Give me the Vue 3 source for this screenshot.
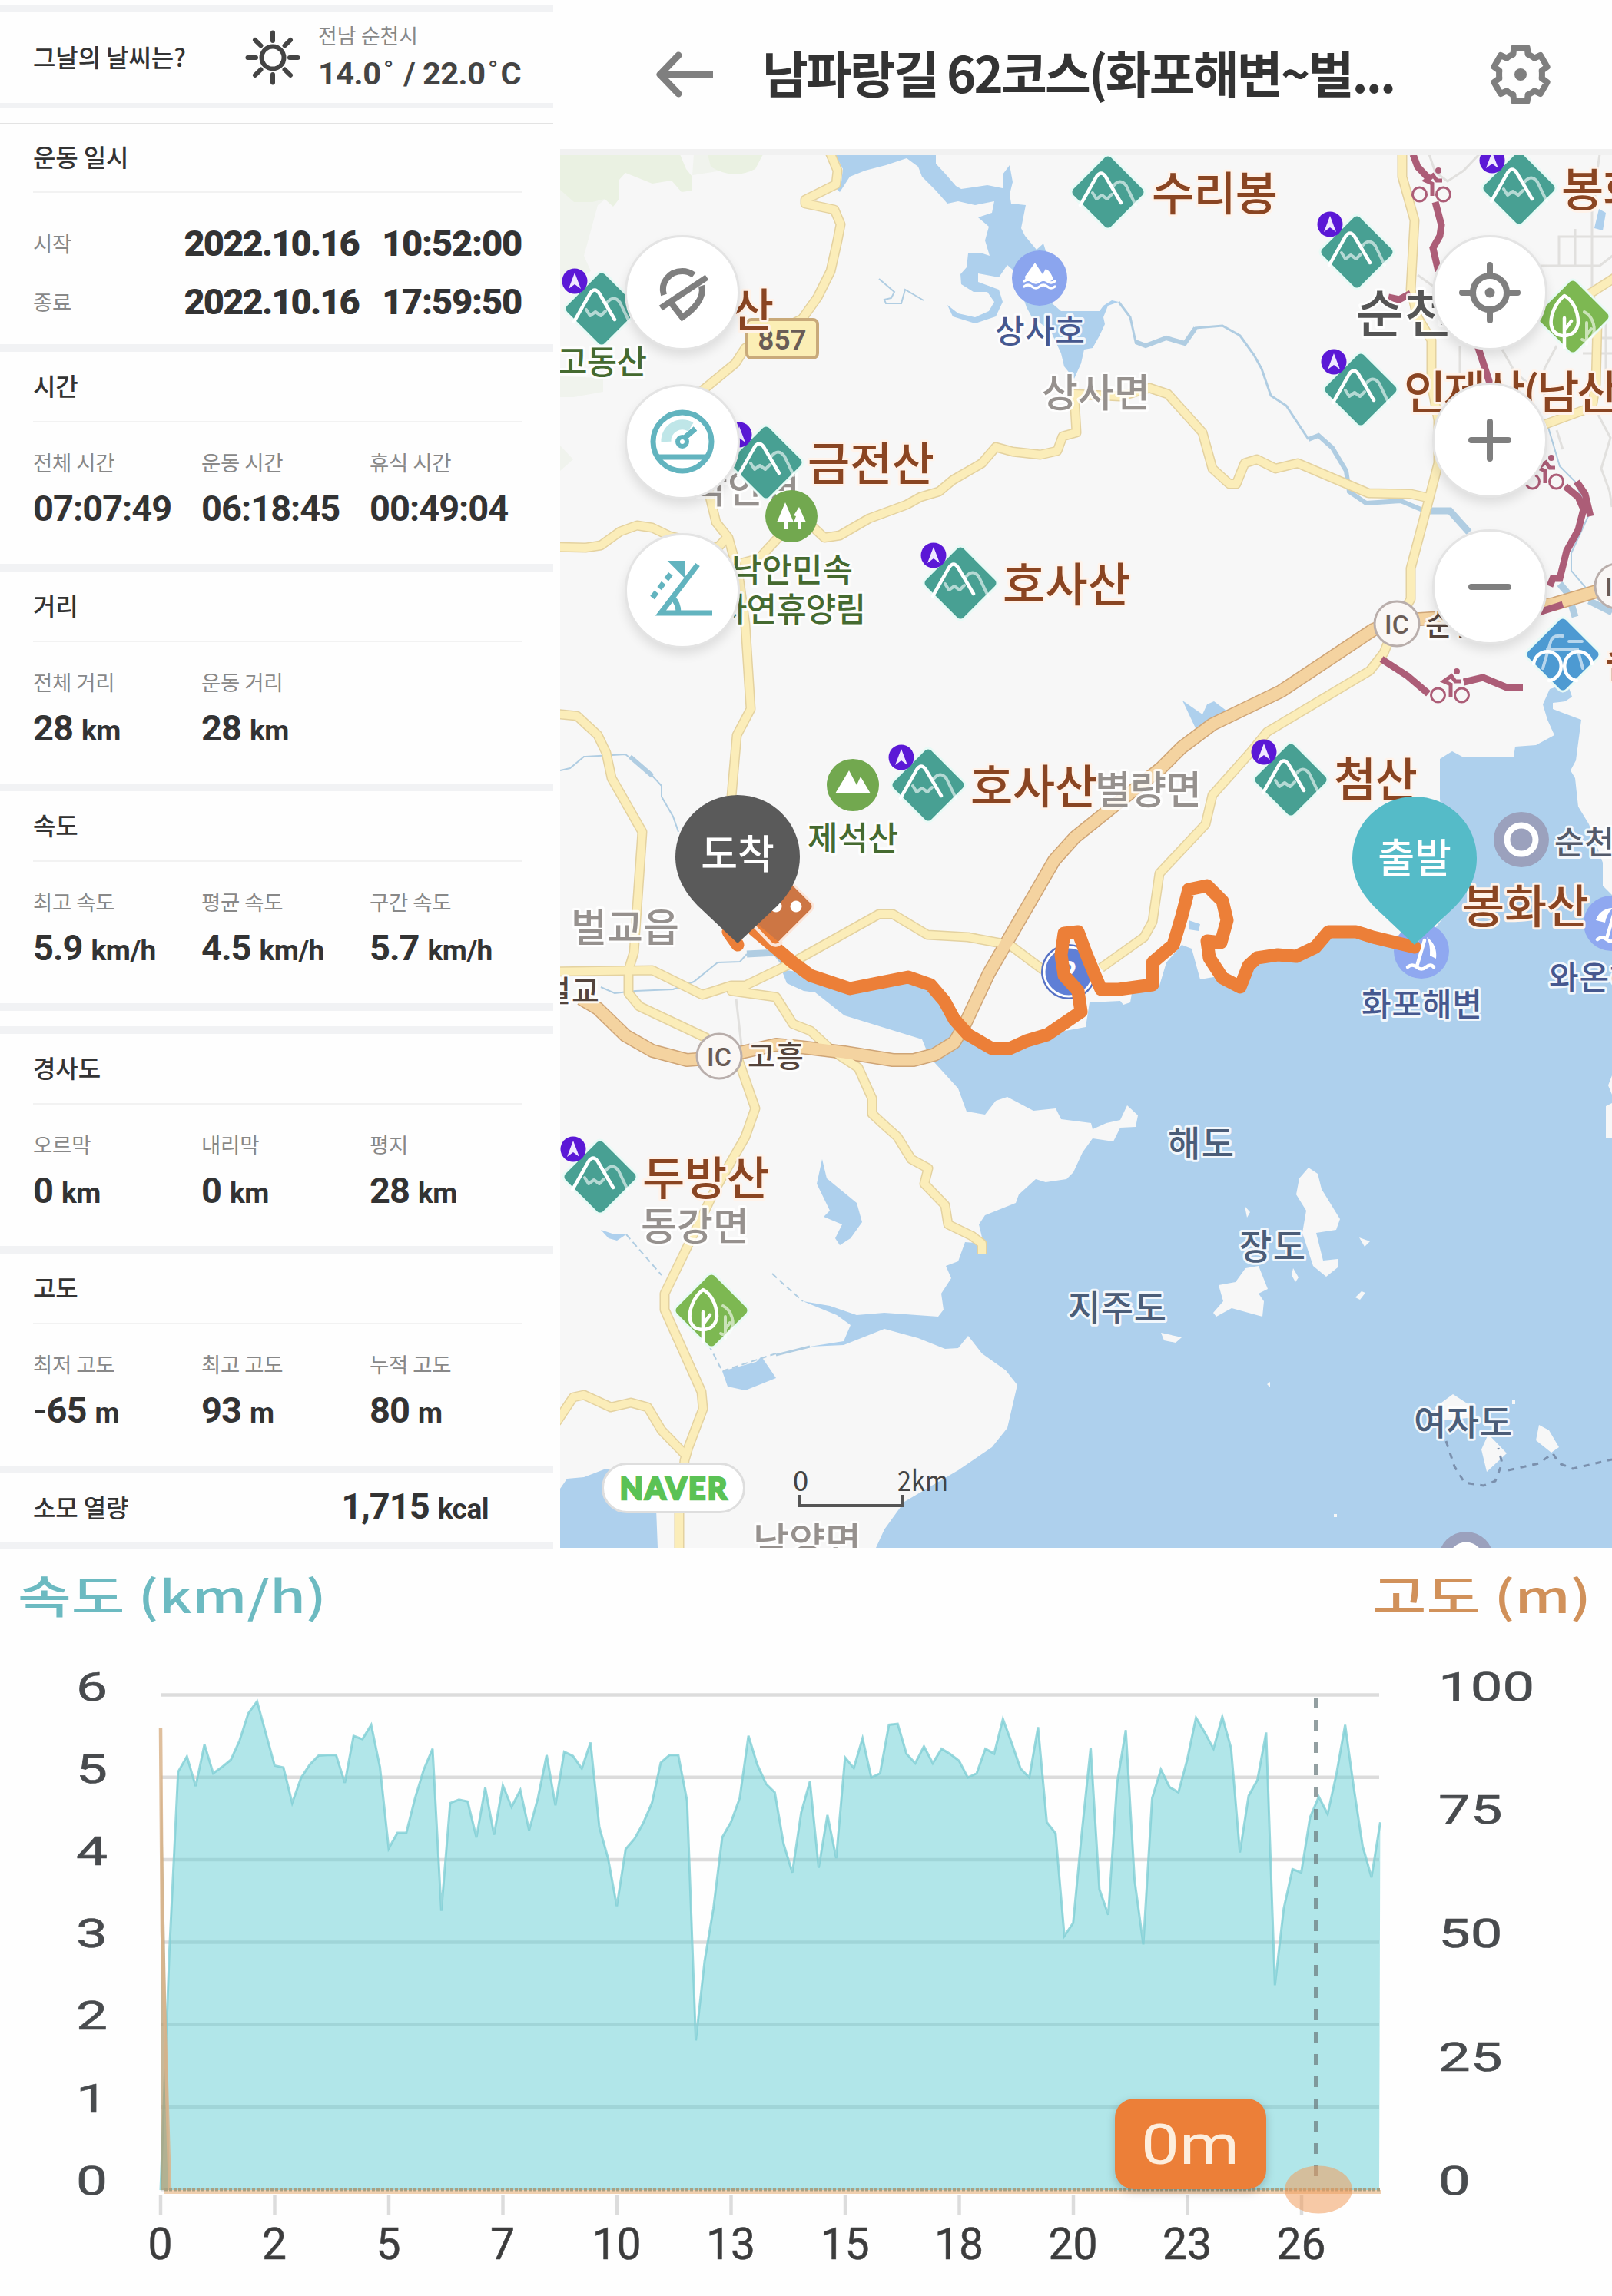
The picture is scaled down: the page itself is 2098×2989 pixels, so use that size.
<template>
  <div class="record">
    <aside class="stats">
      <div class="weather">
        <h3 class="title">그날의 날씨는?</h3>
        <svg class="sun" viewBox="-38 -38 76 76">
          <circle r="14.5" />
          <line v-for="n in 8" :key="n" y1="-32.5" y2="-22" :transform="`rotate(${n * 45})`" />
        </svg>
        <div class="forecast">
          <p class="place">전남 순천시</p>
          <p class="temp">14.0<i>˚</i> / 22.0<i>˚</i>C</p>
        </div>
      </div>

      <section class="card first">
        <h3 class="title">운동 일시</h3>
        <div v-for="row in period" :key="row.label" class="row">
          <span class="label">{{ row.label }}</span>
          <span class="value"><b class="date">{{ row.date }}</b><b class="clock">{{ row.time }}</b></span>
        </div>
      </section>

      <section
          v-for="card in cards"
          :key="card.title"
          class="card"
          :class="{ gap: card.gap }"
      >
        <h3 class="title">{{ card.title }}</h3>
        <div class="cols">
          <div v-for="item in card.items" :key="item[0]" class="col">
            <span class="label">{{ item[0] }}</span>
            <span class="value" :class="{ time: !item[2] }">{{ item[1] }}<small v-if="item[2]">{{ item[2] }}</small></span>
          </div>
        </div>
      </section>

      <section class="calorie">
        <h3 class="title">소모 열량</h3>
        <span class="value">1,715<small>kcal</small></span>
      </section>
      <div class="tail"></div>
    </aside>

    <main class="course">
      <header class="bar">
        <svg class="back" viewBox="0 0 76 64">
          <path d="M74 32H7M31 7L7 32L31 57" />
        </svg>
        <h1>남파랑길 62코스(화포해변~벌...</h1>
        <svg class="gear" viewBox="-42 -42 84 84">
          <polygon :points="gearPoints" />
          <circle r="8" />
        </svg>
      </header>

      <div class="map">
        <svg class="canvas" viewBox="729 202 1369 1813">
          <defs>
            <g id="mountain">
              <rect x="-36" y="-36" width="72" height="72" rx="7" transform="rotate(45)" class="diamond" />
              <path d="M7 -8Q16 -19 24 -8L36 17M-20 1L-15 9L-8 4L-1 9L5 3" class="soft" />
              <path d="M-36 17L-15 -20Q-9 -29 -3 -20L17 14" class="bright" />
            </g>
            <g id="forest">
              <rect x="-36" y="-36" width="72" height="72" rx="7" transform="rotate(45)" class="diamond leaf" />
              <path d="M15 -6C27 0 31 18 25 26Q19 34 12 30M18 8V36M18 24L24 16" class="soft" />
              <path d="M-11 -27C-23 -18 -30 0 -28 12Q-25 25 -11 25Q5 24 7 8C7 -8 -1 -22 -11 -27ZM-11 2V40M-11 18L-2 6" class="bright" />
            </g>
            <g id="arrow">
              <circle r="16.5" fill="#5b18d6" />
              <path d="M0 -11L8 10L0 4L-8 10Z" fill="#f0e8ff" />
            </g>
            <g id="cyclist">
              <circle cx="-15.5" r="9" class="wheel" />
              <circle cx="15.5" r="9" class="wheel" />
              <circle cx="9" cy="-31" r="4" fill="#ac5d77" />
              <path d="M1 2V-14L-8 -18L2 -25L7 -18H14" class="rider" />
            </g>
            <g id="parasol">
              <path d="M-20 -4Q-15 -19 2 -20Q-6 -12 -8 -1ZM7 -18Q21 -8 19 10L11 6Q12 -8 7 -18Z" fill="#fff" />
              <path d="M4 -14L-6 20M-18 21Q-12 16 -6 21T6 21T16 21" class="bright" />
            </g>
          </defs>

          <rect x="729" y="202" width="1369" height="1813" fill="#f7f7f7" />

          <!-- woods -->
          <path class="wood pale" d="M729 201H787V260L778 267L760 333L769 353L729 375ZM903 201L901 228L934 223L950 201ZM729 490L785 492V510L747 517H729ZM729 580L746 598L729 613Z" />
          <path class="wood" d="M729 201H885L893 220L901 230V248L887 250L874 235L849 239L814 225L805 235V260L798 269L787 259L771 263L747 263L729 247ZM921 201L925 217Q954 235 983 220L993 201Z" />

          <!-- water -->
          <path class="water" d="M1087 201L1097 220L1095 237L1088 245L1093 250L1106 230L1126 222L1153 215L1180 206L1195 217L1200 230L1218 248L1233 265L1247 262L1269 267L1294 262L1291 277L1273 283L1287 295L1282 313L1288 333L1276 329L1260 330L1258 348L1250 357L1251 370L1267 380L1285 380L1294 393L1287 405L1269 413L1247 408L1233 397L1240 412L1269 421L1296 412L1305 393L1300 377L1273 367V356L1300 361L1311 345L1320 353L1336 400L1343 413L1367 430L1381 460L1385 477L1398 493L1407 473L1411 455L1422 453L1431 437L1438 422L1436 413L1442 398L1456 393L1447 391L1436 398L1431 405H1407L1381 405L1367 393L1363 333L1358 317L1349 325L1334 307L1329 297L1335 267L1316 265L1314 253L1318 237L1314 215L1305 227V245L1285 241L1251 246L1244 242L1231 227L1218 213V201Z" />
          <path class="water" d="M1017 1262L1024 1280L1046 1290L1061 1292L1099 1322L1200 1353L1207 1370L1216 1383L1247 1417L1258 1447L1282 1451L1296 1433L1311 1428L1345 1446L1374 1443L1381 1457L1420 1462L1422 1470L1440 1462L1458 1458L1467 1439L1481 1452L1478 1467L1458 1468L1449 1486L1422 1482L1409 1500L1397 1526L1388 1535L1361 1539L1348 1535L1326 1555L1322 1566L1282 1582L1274 1594L1280 1619L1256 1617L1247 1642L1231 1648L1238 1664L1225 1684L1228 1705L1221 1714L1151 1709L1115 1712L1080 1700L1045 1694L1089 1712L1107 1725L1098 1746L1054 1753L1098 1751L1151 1730L1195 1742L1230 1756L1247 1755L1260 1739L1278 1762L1309 1784L1324 1803L1311 1859L1291 1884L1247 1914L1177 1955L1151 1991L1140 2015H2098V1482H2090V1440L2098 1436V1425L2093 1413L2098 1400V1165L2086 1153V1123L2068 1073L2054 1050L2050 1013L2044 1003L2051 990L2058 937L2021 923V915L2037 913L2046 907L2040 890L2017 897L2008 917L2014 937L2023 957L1999 970L1972 972L1970 985H1903L1890 978L1874 988V1040L1890 1180L1845 1237L1787 1220L1765 1213H1729L1707 1237L1689 1247H1636L1614 1283L1591 1270L1562 1275L1551 1235L1538 1230L1518 1253L1509 1283L1473 1293L1471 1305L1462 1308L1458 1303L1418 1305L1413 1337L1381 1343L1354 1353L1300 1367L1278 1360L1256 1343L1233 1313L1211 1283L1180 1273L1104 1287L1050 1267Z" />
          <path class="water" d="M1547 1198L1562 1203L1560 1212L1547 1210ZM1539 912L1565 930L1571 917L1580 913L1596 925L1556 948ZM2081 272L2090 277L2086 300L2075 297ZM1070 1509L1076 1534L1115 1566L1122 1591L1107 1612L1093 1621L1087 1612L1096 1594L1072 1584L1080 1576L1063 1541ZM940 1785L984 1773L991 1766L1010 1794L995 1800L970 1810L947 1805ZM782 1601L800 1607L815 1607L803 1615L792 1612ZM729 1938L738 1925L760 1923L786 1913H852L856 2015H729Z" />
          <g class="stream">
            <path d="M1144 363L1164 380L1160 388L1151 390L1153 395H1173L1178 377L1202 391M729 1003L742 1000L760 985L814 982L849 1010L861 1023V1037L876 1063L883 1083M782 1285L800 1293L827 1290L876 1288L903 1278L934 1253L963 1252L972 1242M2014 553L2030 607L2050 627L2068 670L2045 720V743L2068 770L2098 795" />
            <path d="M815 1607L861 1660M1005 1658L1020 1672L1045 1694M1010 1762L940 1785L922 1750" class="faint" />
            <path d="M1054 1753L1010 1764M1456 393L1471 413L1478 445L1491 450L1518 440L1542 447L1556 427L1591 424L1614 437L1632 462L1642 480L1654 515L1674 528L1703 572" class="mid" />
            <path d="M1478 445L1491 450L1518 440L1542 447L1556 427M1703 572L1716 567L1734 583L1752 613L1756 640L1778 655L1823 652L1854 665M820 985L849 1010" class="wide" />
            <path d="M1854 665H1887L1912 693M972 1242L1010 1240L1022 1255M2030 760L2041 773L2050 803M2068 782L2098 797" class="broad" />
          </g>

          <!-- islands -->
          <path fill="#f7f7f7" d="M1703 1520L1715 1528L1720 1548L1744 1587L1739 1601L1713 1605L1722 1641L1741 1639V1650L1726 1662L1709 1648L1695 1605L1700 1576L1687 1555L1691 1534ZM1621 1651L1638 1648L1650 1678L1638 1684L1645 1694L1643 1714L1603 1703L1583 1714L1579 1709L1592 1694L1586 1673L1608 1669ZM1891 1815L1911 1828L1920 1845L1870 1850L1868 1832ZM1937 1867L1961 1892L1935 1916L1928 1887ZM2003 1855L2016 1862L2029 1884L2019 1891L1999 1875ZM1620 1570L1627 1578L1623 1585ZM1769 1611L1783 1616L1776 1623ZM1683 1651L1690 1663L1686 1669L1681 1660ZM1764 1689L1772 1681L1777 1683L1770 1692ZM1511 1735L1538 1741L1530 1748L1515 1745ZM1649 1802L1653 1799V1806ZM1736 1971H1740V1975H1736ZM1968 1823H1972V1828H1968Z" />
          <path class="ferry" d="M1882 1876L1893 1909L1906 1930L1931 1934L1946 1928L1955 1905L1950 1885M1963 1914L2003 1905L2021 1892L2029 1905L2047 1912L2098 1900" />

          <!-- city blocks -->
          <g class="street">
            <path d="M2006 346H2082L2105 328M2029 346V308H2098M2050 298V346M2072 270V400M1860 201L1868 224L1884 236L1905 222L1925 201M2082 201L2076 240V270M1845 358L1870 376M1900 450V520M1955 455L1972 485L1990 500M2026 450L2010 480V520M2090 420V500M2060 440H2098M2060 460H2098M2080 540L2096 570L2084 610L2095 640L2098 660M2026 560L2034 585M958 1300L966 1370" />
          </g>

          <!-- roads -->
          <g v-for="kind in ['casing', 'fill']" :key="kind" :class="kind">
            <path v-for="(d, i) in roads" :key="i" :d="d" />
            <path class="highway" :d="highway" />
          </g>

          <g class="cycleway">
            <path d="M1839 201L1845 217L1862 235M1868 263L1876 293L1874 307L1865 323L1872 353M1923 450L1941 505M2052 627L2063 643L2070 672M2037 633L2054 647L2061 663L2054 690L2039 717L2030 753H2021L2017 763M2003 797L2034 787M1798 858L1832 880L1859 903M1905 888L1930 882L1961 895H1982" />
            <path d="M1807 387L1821 390L1836 382" />
          </g>
          <use href="#cyclist" x="1863" y="253" />
          <use href="#cyclist" x="2010" y="627" />
          <use href="#cyclist" x="1887" y="905" />

          <rect x="972" y="416" width="92" height="50" rx="6" class="shield" />
          <text x="1018" y="455" class="road-no">857</text>

          <g v-for="(ic, i) in junctions" :key="'ic' + i">
            <circle :cx="ic[0]" :cy="ic[1]" r="29" class="ic" />
            <text :x="ic[0]" :y="ic[1] + 13" class="ic-text">IC</text>
          </g>

          <g v-for="(l, i) in lowLabels" :key="'low' + i">
            <text :x="l[1]" :y="l[2]" dy=".37em" :class="l[3]" :textLength="l[4]">{{ l[0] }}</text>
          </g>

          <!-- round places -->
          <g transform="translate(1353 362)">
            <circle r="36" fill="#8ba5ee" />
            <path d="M-19 -2L-6 -20L4 -5L8 -12Q14 -10 18 2L14 4H-18Z" fill="#fff" />
            <path d="M-20 4Q-15 0 -10 4T0 4T10 4T20 4M-20 11Q-15 7 -10 11T0 11T10 11T20 11" class="wave" />
          </g>
          <g transform="translate(1110 1022)">
            <circle r="34" fill="#72a84f" />
            <path d="M-23 11L-5 -19L5 0L10 -11L23 11Z" fill="#fff" />
          </g>
          <g v-for="x in [1850, 2097]" :key="x" :transform="`translate(${x} ${x === 1850 ? 1238 : 1202})`">
            <circle r="36" fill="#8fa8f0" />
            <use href="#parasol" />
          </g>
          <g v-for="p in [[1980, 1093], [1908, 2030]]" :key="p[0]" :transform="`translate(${p[0]} ${p[1]})`">
            <circle r="36" fill="#9ba1bd" />
            <circle r="18.5" class="ring" />
          </g>
          <g transform="translate(1391 1265)">
            <circle r="36" fill="#5470c4" />
            <circle r="32" fill="#5f7fd6" stroke="#fff" stroke-width="3" />
            <text y="14" class="two">2</text>
          </g>

          <use v-for="(m, i) in mountains" :key="'m' + i" href="#mountain" :x="m[0]" :y="m[1]" />
          <use v-for="(m, i) in badged" :key="'b' + i" href="#arrow" :x="m[0] - 35" :y="m[1] - 36" />
          <use href="#forest" x="2047" y="412" />
          <use href="#forest" x="926" y="1706" />
          <g transform="translate(1030 672)">
            <circle r="34" fill="#72a84f" />
            <path d="M-8 -18L3 8H-5V17H-10V8H-19ZM10 -12L19 8H12V17H8V8H3L6 0L3 -1Z" fill="#fff" />
          </g>
          <g transform="translate(2034 852)">
            <rect x="-36" y="-36" width="72" height="72" rx="7" transform="rotate(45)" class="diamond sky" />
            <path d="M-26 18L-16 -16Q-14 -26 0 -24M-20 -7H19L26 18M8 -17H25" class="soft" />
            <path d="M-38 12A18 19 0 1 1 -18 34M38 12A18 19 0 1 0 18 34" class="bright" />
          </g>

          <g v-for="(l, i) in labels" :key="'label' + i">
            <text :x="l[1]" :y="l[2]" dy=".37em" :class="l[3]" :textLength="l[4]">{{ l[0] }}</text>
          </g>

          <!-- bus terminal hidden under the finish pin -->
          <g transform="translate(1010 1180)">
            <rect x="-36" y="-36" width="72" height="72" rx="7" transform="rotate(45)" class="diamond bus" />
            <circle r="7.5" fill="#fff" />
            <circle cx="26" r="7.5" fill="#fff" />
          </g>

          <path class="track" d="M948 1213L960 1230M981 1210L1032 1253L1055 1270L1106 1287L1182 1272L1211 1282L1229 1303L1242 1327L1260 1347L1291 1365H1314L1336 1355L1363 1347L1407 1317L1403 1290L1385 1270L1381 1243L1385 1215L1403 1213L1413 1240L1424 1267L1433 1288H1456L1500 1282V1253L1527 1230L1538 1193L1547 1158L1571 1153L1591 1173L1597 1198L1589 1227L1571 1225L1574 1247L1591 1273L1614 1285L1625 1257L1636 1247L1663 1243L1687 1245L1712 1233L1729 1213H1765L1787 1220L1841 1233" />
          <path d="M982 1206L1003 1228Q1010 1234 1018 1226" class="bus-edge" />

          <g transform="translate(960 1116)">
            <path :d="pin" fill="#5a5a5a" />
            <text y="15" class="pin-text">도착</text>
          </g>
          <g transform="translate(1841 1118)">
            <path :d="pin" fill="#55bbc8" />
            <text y="18" class="pin-text">출발</text>
          </g>

          <path class="scale" d="M1041 1946V1960H1174V1946" />
          <text x="1042" y="1941" class="scale-text" text-anchor="middle">0</text>
          <text x="1168" y="1941" class="scale-text" textLength="66" lengthAdjust="spacingAndGlyphs">2km</text>
        </svg>

        <div class="tools left">
          <button class="tool">
            <svg viewBox="-50 -50 100 100" class="gray">
              <path d="M-24 3C-29 -13 -17 -28 0 -28Q8 -28 15 -23M-28 20L32 -20M25 -9C30 8 12 24 0 32L-14 14" />
            </svg>
          </button>
          <button class="tool">
            <svg viewBox="-50 -50 100 100" class="cyan">
              <path d="M-21 0A21 21 0 0 1 11 -19" stroke="#bfe6e8" stroke-width="13" />
              <circle r="38" />
              <path d="M-32 20H32M3 -5L17 -17" />
              <circle r="6" stroke-width="6" />
            </svg>
          </button>
          <button class="tool">
            <svg viewBox="-50 -50 100 100" class="cyan">
              <path d="M20 -34L-28 29H39M-13 9Q-5 16 -5 29" />
              <path d="M-39 9L-12 -26" stroke-dasharray="9 6" />
              <path d="M-17 -38H2V-19Z" fill="#62b4bf" stroke-width="2" />
            </svg>
          </button>
        </div>
        <div class="tools right">
          <button class="tool">
            <svg viewBox="-50 -50 100 100" class="gray">
              <circle r="22" />
              <path d="M0 -36V-22M0 22V36M-36 0H-22M22 0H36" stroke-linecap="round" />
              <circle r="6.5" fill="#7f7f7f" stroke="none" />
            </svg>
          </button>
          <button class="tool">
            <svg viewBox="-50 -50 100 100" class="gray"><path d="M-24 0H24M0 -24V24" stroke-linecap="round" /></svg>
          </button>
          <button class="tool">
            <svg viewBox="-50 -50 100 100" class="gray"><path d="M-24 0H24" stroke-linecap="round" /></svg>
          </button>
        </div>
        <div class="naver">NAVER</div>
      </div>
    </main>

    <svg class="chart" viewBox="0 0 2098 974">
      <text x="23" y="85" class="speed-title" textLength="402" lengthAdjust="spacingAndGlyphs">속도 (km/h)</text>
      <text x="1786" y="85" class="alt-title" textLength="285" lengthAdjust="spacingAndGlyphs">고도 (m)</text>

      <g v-for="n in 7" :key="'g' + n">
        <line x1="209" x2="1795" :y1="191.5 + (n - 1) * 107.3" :y2="191.5 + (n - 1) * 107.3" class="grid" />
        <text :x="99" :y="198.5 + (n - 1) * 107.2" class="axis" textLength="41" lengthAdjust="spacingAndGlyphs">{{ 7 - n }}</text>
      </g>
      <text
          v-for="(t, i) in altitudeTicks"
          :key="'a' + t"
          x="1872"
          :y="198.5 + i * 160.8"
          class="axis"
          :textLength="String(t).length * 41.7"
          lengthAdjust="spacingAndGlyphs"
      >{{ t }}</text>
      <g v-for="(t, i) in distanceTicks" :key="'d' + t">
        <line :x1="209 + i * 148.5" :x2="209 + i * 148.5" y1="842" y2="869" class="grid" />
        <text :x="208.5 + i * 148.5" y="926" class="axis km">{{ t }}</text>
      </g>

      <polygon :points="`${speedLine} 1795,836 209,836`" class="area" />
      <polyline :points="speedLine" class="speed" />
      <path d="M209 235V836H221Z" class="alt-area" />
      <path d="M209 235L211 500L221 836" class="alt" />
      <path d="M214 838.5H1797" stroke="#f0cfae" stroke-width="5" />
      <path d="M214 835.5H1797" class="base" />

      <line x1="1713" x2="1713" y1="195" y2="830" class="cursor" />
      <ellipse cx="1716" cy="835.5" rx="44" ry="31" fill="#f09c5c" opacity=".55" />
      <rect x="1451" y="717" width="197" height="118" rx="25" class="bubble" />
      <text x="1549" y="802" class="bubble-text" textLength="128" lengthAdjust="spacingAndGlyphs">0m</text>
    </svg>
  </div>
</template>

<script setup>
import { computed } from 'vue'

const period = [
  { label: '시작', date: '2022.10.16', time: '10:52:00' },
  { label: '종료', date: '2022.10.16', time: '17:59:50' }
]

const cards = [
  { title: '시간', items: [['전체 시간', '07:07:49'], ['운동 시간', '06:18:45'], ['휴식 시간', '00:49:04']] },
  { title: '거리', items: [['전체 거리', '28', 'km'], ['운동 거리', '28', 'km']] },
  { title: '속도', items: [['최고 속도', '5.9', 'km/h'], ['평균 속도', '4.5', 'km/h'], ['구간 속도', '5.7', 'km/h']] },
  { title: '경사도', gap: true, items: [['오르막', '0', 'km'], ['내리막', '0', 'km'], ['평지', '28', 'km']] },
  { title: '고도', items: [['최저 고도', '-65', 'm'], ['최고 고도', '93', 'm'], ['누적 고도', '80', 'm']] }
]

// 톱니 6개짜리 설정 아이콘
const gearPoints = computed(() => {
  const points = []
  for (let k = 0; k < 6; k++) {
    for (const [deg, r] of [[-25, 28], [-20, 28], [-14, 36], [14, 36], [20, 28], [25, 28]]) {
      const a = ((k * 60 + deg) * Math.PI) / 180
      points.push(`${(Math.sin(a) * r).toFixed(1)},${(-Math.cos(a) * r).toFixed(1)}`)
    }
  }
  return points.join(' ')
})

const pin = 'M0 112L-52 63C-72 42 -81 22 -81 -1A81 80 0 0 1 81 -1C81 22 72 42 52 63Z'

const roads = [
  'M1079 196L1090 222L1088 240L1048 260V265L1086 273L1094 292L1090 313L1081 353L1064 387L1044 415L970 453L957 473L912 510L905 580L923 643L932 680L948 700L961 747L970 813L977 923L959 957L957 980L952 1037V1100',
  'M720 712L762 713L782 710L807 692L829 684L849 687L872 698L934 713L946 700',
  'M965 733L988 727L1010 703L1028 683L1059 687L1073 700L1093 697L1131 675L1180 657L1198 647L1222 640L1240 625L1278 603L1296 582L1318 588L1354 592L1376 587L1383 568L1401 563L1398 513L1458 516L1496 505L1520 513L1565 563L1578 610L1600 630H1609L1620 603L1636 598L1660 610L1689 603L1781 642L1836 643L1859 648',
  'M1825 196V230L1841 287L1836 377L1845 413L1863 443V500L1872 547V603L1859 653L1836 740V780L1816 813L1801 850L1783 873L1649 953L1627 980L1578 1035L1569 1073L1509 1137L1500 1200L1489 1220L1433 1260',
  'M2104 360L2068 383L2079 420L2077 500L2072 530L2012 552',
  'M720 929L751 932L778 957L789 980L796 1013L836 1083L825 1240L818 1263V1293L832 1310L921 1352',
  'M720 1265L849 1263L914 1295L952 1283H970L1024 1257L1144 1190H1162L1207 1217L1260 1220L1314 1230L1358 1263',
  'M952 1282V1290L1010 1298L1032 1333L1055 1342L1082 1367L1117 1390L1135 1430V1450L1149 1463L1168 1480L1186 1509L1208 1521L1203 1541L1230 1569L1234 1594L1265 1609L1278 1619V1632',
  'M961 1380L983 1443L970 1480L931 1548L865 1684V1705L913 1812L915 1834L896 1884L891 1901L884 1969V2020',
  'M724 1852L746 1819L760 1816L795 1832L821 1826L843 1832L861 1862L893 1895'
]
const highway = 'M756 1300L778 1313L814 1348L849 1368L894 1380L934 1377L1010 1360L1041 1363L1099 1370L1162 1380H1189L1216 1373L1242 1357L1256 1333L1287 1267L1372 1120L1399 1090L1511 1000L1538 973L1578 943L1667 900L1787 820L1816 808L1940 800L2023 786L2104 762'

const junctions = [[1818, 812], [936, 1375], [2105, 763]]

const badged = [
  [783, 402], [1766, 328], [1977, 245], [1771, 507], [997, 602],
  [1250, 759], [1208, 1022], [1680, 1015], [781, 1532]
]
const mountains = [[1442, 250], ...badged]

// [글자, x, y, 스타일, 너비]
const lowLabels = [
  ['상사면', 1356, 511, 'town', 141],
  ['낙안면', 900, 636, 'town', 141],
  ['별량면', 1425, 1028, 'town', 139],
  ['벌교읍', 743, 1207, 'town', 141],
  ['동강면', 834, 1596, 'town', 141],
  ['남양면', 980, 2007, 'town', 141],
  ['순천시', 1765, 408, 'city', 188],
  ['순천만', 1855, 813, 'exit', 108],
  ['고흥', 973, 1375, 'exit', 73],
  ['벌교', 707, 1290, 'exit', 73]
]
const labels = [
  ['수리봉', 1499, 252, 'peak', 164],
  ['봉화산', 2032, 247, 'peak', 164],
  ['인제산(남산)', 1827, 511, 'peak', 298],
  ['산', 952, 404, 'peak', 54],
  ['금전산', 1051, 604, 'peak', 165],
  ['호사산', 1305, 761, 'peak', 166],
  ['호사산', 1263, 1024, 'peak', 165],
  ['첨산', 1736, 1015, 'peak', 109],
  ['봉화산', 1903, 1180, 'peak', 165],
  ['두방산', 836, 1534, 'peak', 165],
  ['순', 2089, 860, 'peak', 54],
  ['고동산', 725, 471, 'park', 117],
  ['낙안민속', 952, 742, 'park', 158],
  ['자연휴양림', 933, 793, 'park', 194],
  ['제석산', 1051, 1091, 'park', 118],
  ['상사호', 1295, 430, 'sea', 117],
  ['화포해변', 1772, 1307, 'sea', 157],
  ['와온해변', 2016, 1272, 'sea', 157],
  ['순천만', 2023, 1096, 'spot', 117],
  ['해도', 1520, 1488, 'isle', 86],
  ['장도', 1613, 1622, 'isle', 86],
  ['지주도', 1390, 1702, 'isle', 128],
  ['여자도', 1840, 1851, 'isle', 128]
]

const altitudeTicks = [100, 75, 50, 25, 0]
const distanceTicks = [0, 2, 5, 7, 10, 13, 15, 18, 20, 23, 26]

const speedSamples = [
  1347, 850, 475, 443, 505, 418, 478, 465, 450, 410, 353, 328, 395, 462, 466, 540, 488, 460, 441, 440,
  440, 498, 400, 407, 377, 465, 635, 602, 602, 530, 470, 427, 765, 540, 533, 537, 612, 508, 606, 503,
  548, 513, 597, 530, 440, 545, 433, 442, 468, 414, 590, 655, 755, 636, 615, 582, 540, 456, 440, 440,
  535, 1035, 870, 760, 612, 580, 530, 400, 460, 500, 518, 625, 685, 560, 495, 675, 565, 655, 445, 467,
  405, 487, 478, 377, 375, 437, 457, 422, 457, 427, 438, 452, 487, 478, 427, 437, 365, 415, 468, 487,
  382, 580, 603, 817, 790, 600, 425, 720, 773, 500, 388, 700, 835, 530, 470, 507, 518, 450, 362, 393,
  427, 360, 425, 643, 525, 492, 393, 920, 760, 678, 685, 570, 527, 563, 480, 377, 510, 630, 695, 580
]
const speedLine = computed(() =>
  speedSamples.map((v, i) => `${(209 + i * 11.42).toFixed(1)},${(v * 0.6244 - 5).toFixed(1)}`).join(' ')
)
</script>

<style>
body {
  margin: 0;
  background: #fefefe;
}
</style>

<style scoped>
.record {
  display: grid;
  grid-template-columns: 729px 1369px;
  grid-template-rows: 2015px 974px;
  width: 2098px;
  height: 2989px;
  overflow: hidden;
  font-family: Roboto, 'Noto Sans CJK KR', sans-serif;
  color: #333;
}

h1, h3, p {
  margin: 0;
}

.stats {
  width: 720px;
}

.title {
  font-family: 'Noto Sans CJK KR', sans-serif;
  font-size: 32px;
  font-weight: 500;
  letter-spacing: -0.1px;
}

.label {
  font-family: 'Noto Sans CJK KR', sans-serif;
  font-size: 27.5px;
  font-weight: 400;
  letter-spacing: -0.2px;
  color: #888;
}

.weather {
  display: flex;
  align-items: center;
  box-sizing: border-box;
  height: 135px;
  margin-top: 6px;
  padding-left: 43px;
  border-top: 10px solid #f1f2f4;
  border-bottom: 7px solid #f1f2f4;
}

.weather .title {
  width: 274px;
  padding-bottom: 4px;
}

.sun {
  width: 76px;
  height: 76px;
  margin-right: 21px;
  fill: none;
  stroke: #444;
  stroke-width: 6;
  stroke-linecap: round;
}

.place {
  font-size: 26.8px;
  line-height: 38px;
  color: #888;
}

.temp {
  font-size: 41.5px;
  font-weight: 700;
  line-height: 50px;
  padding-top: 4px;
  color: #444;
  letter-spacing: -0.5px;
  white-space: nowrap;
}

.temp i {
  display: inline-block;
  width: 20px;
  font-style: normal;
  text-align: center;
}

.card {
  box-sizing: border-box;
  height: 286px;
  padding: 0 41px 0 43px;
  border-top: 10px solid #f1f2f4;
}

.card .title {
  height: 90px;
  line-height: 86px;
  border-bottom: 2px solid #f2f2f2;
}

.card.first {
  height: 288px;
  margin-top: 19px;
  border-top: 2px solid #e3e3e3;
}

.card.first .title {
  height: 87px;
  line-height: 83px;
}

.card.gap {
  height: 316px;
  padding-top: 20px;
}

.card.gap::before {
  content: '';
  display: block;
  height: 10px;
  margin: 0 -41px 0 -43px;
  background: #f1f2f4;
}

.row {
  display: flex;
  align-items: center;
  justify-content: space-between;
  height: 76px;
}

.row .label {
  padding-bottom: 3px;
}

.title + .row {
  margin-top: 28px;
}

.value {
  font-size: 47px;
  font-weight: 700;
  line-height: 56px;
  letter-spacing: -1px;
  white-space: nowrap;
}

.row .value {
  display: flex;
  gap: 30px;
}

.date {
  letter-spacing: -1.9px;
}

.clock {
  letter-spacing: -1.2px;
}

.value small {
  margin-left: 11px;
  font-size: 37px;
  letter-spacing: -0.5px;
}

.cols {
  display: flex;
  padding-top: 30px;
}

.col {
  display: flex;
  flex-direction: column;
  width: 219px;
  flex: none;
}

.col .label {
  line-height: 42px;
  margin-bottom: 12px;
}

.calorie {
  display: flex;
  align-items: center;
  justify-content: space-between;
  box-sizing: border-box;
  height: 100px;
  padding: 0 84px 0 43px;
  border-top: 10px solid #f1f2f4;
}

.calorie .title {
  padding-bottom: 4px;
}

.tail {
  height: 8px;
  background: #f1f2f4;
}

.course {
  display: flex;
  flex-direction: column;
}

.bar {
  display: flex;
  align-items: center;
  box-sizing: border-box;
  height: 202px;
  padding: 0 0 0 123px;
  border-bottom: 8px solid #f1f1f1;
}

.back {
  width: 76px;
  height: 64px;
  fill: none;
  stroke: #7f7f7f;
  stroke-width: 9;
  stroke-linecap: round;
  stroke-linejoin: round;
}

.bar h1 {
  width: 942px;
  padding: 0 0 8px 64px;
  box-sizing: border-box;
  font-family: 'Noto Sans CJK KR', sans-serif;
  font-size: 65px;
  font-weight: 700;
  letter-spacing: -2.8px;
  white-space: nowrap;
}

.gear {
  width: 84px;
  height: 84px;
  margin-left: 67px;
  fill: none;
  stroke: #7f7f7f;
  stroke-width: 8;
  stroke-linejoin: round;
}

.gear circle {
  fill: #7f7f7f;
  stroke: none;
}

.map {
  position: relative;
  height: 1813px;
  overflow: hidden;
}

.canvas {
  display: block;
  width: 1369px;
  height: 1813px;
  font-family: 'Noto Sans CJK KR', sans-serif;
}

.wood { fill: #eaf1e2; }
.wood.pale { fill: #f0f3ed; }
.water { fill: #aed0ed; }

.stream {
  fill: none;
  stroke: #b0cde2;
  stroke-width: 2;
}
.stream .faint { stroke-dasharray: 8 5; }
.stream .mid { stroke-width: 3; }
.stream .wide { stroke-width: 6; }
.stream .broad { stroke-width: 9; }

.ferry {
  fill: none;
  stroke: #7b90ad;
  stroke-width: 3;
  stroke-dasharray: 8 8;
}

.street {
  fill: none;
  stroke: #e1e0de;
  stroke-width: 3;
}

.casing, .fill {
  fill: none;
  stroke-linejoin: round;
}
.casing { stroke: #e4d2a0; stroke-width: 13; }
.casing .highway { stroke: #cfa577; stroke-width: 18; }
.fill { stroke: #fbedb9; stroke-width: 10; }
.fill .highway { stroke: #f4d3a0; stroke-width: 15; }

.cycleway {
  fill: none;
  stroke: #ac5d77;
  stroke-width: 9;
}

.wheel { fill: #f7f7f7; stroke: #ac5d77; stroke-width: 3; }
.rider { fill: none; stroke: #ac5d77; stroke-width: 5; }

.diamond { fill: #48a093; stroke: #e9faf6; stroke-width: 3; }
.diamond.leaf { fill: #7db852; }
.diamond.sky { fill: #4d9ad2; }
.diamond.bus { fill: #cd7644; stroke: #fbe6da; }
.bus-edge { fill: none; stroke: #fbe6da; stroke-width: 4; }

.soft, .bright, .wave {
  fill: none;
  stroke: #fff;
  stroke-width: 4.5;
  stroke-linecap: round;
  stroke-linejoin: round;
}
.soft { stroke: #fff; stroke-opacity: 0.6; stroke-width: 4; }
.wave { stroke-width: 3.5; stroke: #fff; }

.ring { fill: none; stroke: #fff; stroke-width: 8; }
.shield { fill: #fbeeb5; stroke: #c9aa7a; stroke-width: 4; }
.ic { fill: #faf7f5; stroke: #b9aeab; stroke-width: 3; }

.ic-text, .road-no, .two {
  font-family: Roboto, sans-serif;
  font-size: 34px;
  font-weight: 500;
  fill: #6a5c56;
  text-anchor: middle;
}
.road-no { font-size: 37px; font-weight: 600; }
.two { font-size: 38px; font-weight: 700; fill: #fff; }

.town, .city, .exit, .peak, .park, .sea, .spot, .isle {
  font-weight: 500;
  paint-order: stroke;
  stroke: rgba(255, 255, 255, 0.85);
  stroke-width: 6px;
  stroke-linejoin: round;
}
.town { font-size: 51px; fill: #96918e; }
.city { font-size: 67px; fill: #555; }
.exit { font-size: 39px; fill: #54443c; }
.peak { font-size: 60px; fill: #8a4522; stroke: #fff3ea; }
.park { font-size: 43px; fill: #456a30; }
.sea { font-size: 42px; fill: #46588f; }
.spot { font-size: 42px; fill: #545b6b; }
.isle { font-size: 46px; fill: #4b5d78; }

.track {
  fill: none;
  stroke: #ec7f38;
  stroke-width: 17;
  stroke-linejoin: round;
  stroke-linecap: round;
}

.pin-text {
  font-size: 52px;
  font-weight: 500;
  fill: #fff;
  text-anchor: middle;
}

.scale { fill: none; stroke: #555; stroke-width: 4; }
.scale-text { font-size: 37px; fill: #444; }

.tools {
  position: absolute;
  top: 104px;
  display: flex;
  flex-direction: column;
  gap: 44px;
}
.tools.left { left: 84px; }
.tools.right { right: 84px; gap: 41.5px; }

.tool {
  display: flex;
  align-items: center;
  justify-content: center;
  width: 150px;
  height: 150px;
  padding: 0;
  box-sizing: border-box;
  border: 3px solid #e4e4e4;
  border-radius: 50%;
  background: #fff;
  box-shadow: 0 8px 14px rgba(0, 0, 0, 0.1);
}

.tool svg {
  width: 100px;
  height: 100px;
  flex: none;
  fill: none;
  stroke-width: 8;
}
.tool .gray { stroke: #7f7f7f; }
.tool .cyan { stroke: #62b4bf; stroke-width: 7; }

.naver {
  position: absolute;
  left: 54px;
  top: 1702px;
  width: 187px;
  height: 66px;
  box-sizing: border-box;
  border: 3px solid #dedede;
  border-radius: 33px;
  background: #fff;
  color: #5bc255;
  font-family: Lato, sans-serif;
  font-size: 39px;
  font-weight: 900;
  line-height: 60px;
  letter-spacing: 2.2px;
  text-indent: 2px;
  text-align: center;
  -webkit-text-stroke: 2.5px #5bc255;
}

.chart {
  grid-column: 1 / 3;
  width: 2098px;
  height: 974px;
}

.speed-title, .alt-title {
  font-family: 'Noto Sans CJK KR', sans-serif;
  font-size: 58px;
  font-weight: 500;
  fill: #6cbac1;
}
.alt-title { fill: #d1915a; }

.axis { font-size: 52px; fill: #484b4e; stroke: #484b4e; stroke-width: 0.6px; }
.axis.km { font-size: 57px; text-anchor: middle; fill: #3c3c3c; }

.grid { stroke: #dcdcdc; stroke-width: 4.5; }
.area { fill: #5fcdd3; fill-opacity: 0.48; }
.speed { fill: none; stroke: #7fced4; stroke-width: 3; stroke-opacity: 0.8; }
.alt-area { fill: #b19a6c; fill-opacity: 0.7; }
.alt { fill: none; stroke: #d9b48c; stroke-width: 4.5; stroke-opacity: 0.85; }
.base { stroke: #a9a183; stroke-width: 4; stroke-dasharray: 4 2; }
.cursor { stroke: #6f7f82; stroke-opacity: 0.75; stroke-width: 6; stroke-dasharray: 14 15; }
.bubble { fill: #ec7f38; filter: drop-shadow(0 4px 6px rgba(0, 0, 0, 0.2)); }
.bubble-text { font-size: 72px; fill: #fdeedd; text-anchor: middle; }
</style>
